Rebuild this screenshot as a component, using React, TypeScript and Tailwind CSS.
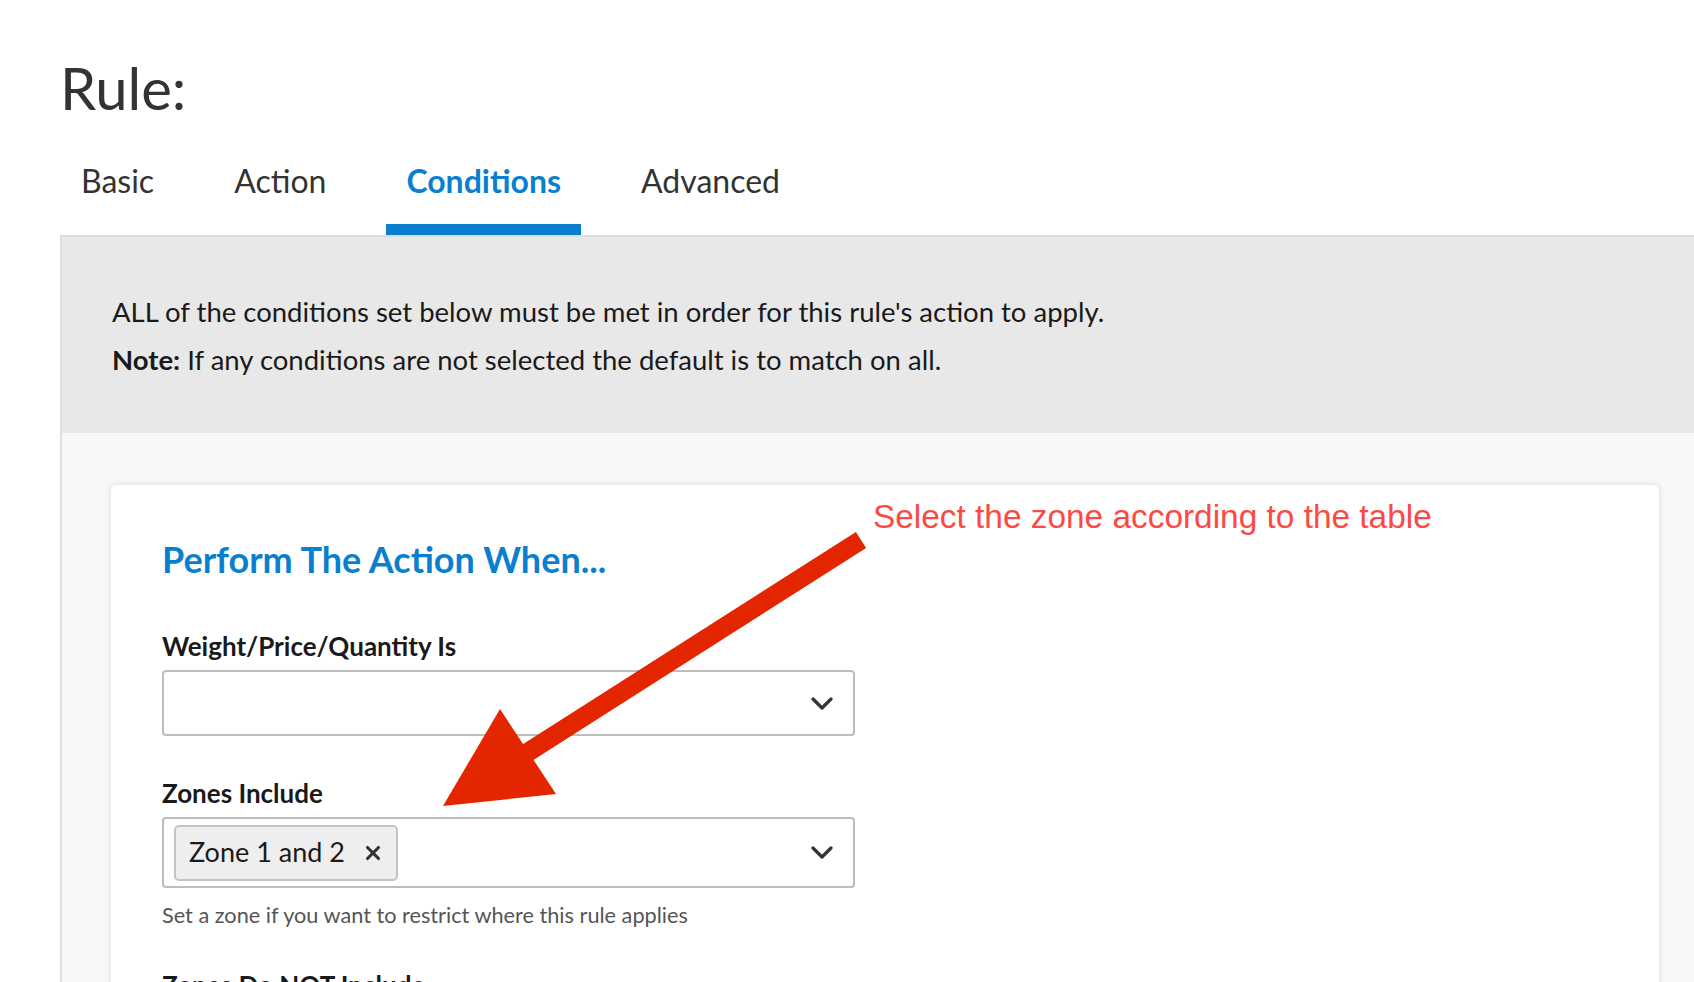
import { X } from "lucide-react";

const tabs = ["Basic", "Action", "Conditions", "Advanced"];

function Chevron() {
  return (
    <svg width="22" height="13" viewBox="0 0 22 13" className="mr-[20px]">
      <polyline points="2,2 11,11 20,2" fill="none" stroke="#333" strokeWidth="3.2" strokeLinecap="round" strokeLinejoin="round" />
    </svg>
  );
}

function Arrow() {
  return (
    <svg
      className="absolute left-0 top-0 pointer-events-none"
      width="1694"
      height="982"
      viewBox="0 0 1694 982"
    >
      <line x1="861" y1="540" x2="522" y2="756" stroke="#e32600" strokeWidth="19" />
      <polygon points="500,709 443,806 556,794" fill="#e32600" />
    </svg>
  );
}

export default function App() {
  return (
    <div className="relative w-[1694px] h-[982px] overflow-hidden bg-white font-['Lato','Noto_Sans',sans-serif] text-[#333]">
      <h1 className="ml-[60px] pt-[59px] text-[58px] leading-[58px] font-normal text-[#333]">Rule:</h1>

      <div className="ml-[61px] mt-[44px] flex gap-[40px]">
        {tabs.map((t) => {
          const active = t === "Conditions";
          return (
            <div
              key={t}
              className={
                active
                  ? "px-[20px] pb-[23px] text-[32px] leading-[40px] font-bold text-[#0a7fd0] border-b-[11px] border-[#0a7fd0]"
                  : "px-[20px] pb-[23px] text-[32px] leading-[40px] text-[#333] border-b-[11px] border-transparent"
              }
            >
              {t}
            </div>
          );
        })}
      </div>

      <div className="ml-[60px] border-l-2 border-[#dedede] bg-[#f8f8f8]">
        <div className="border-t-2 border-[#dcdcdc] bg-[#e8e8e8] pl-[50px] pt-[51px] pb-[49px] text-[27.5px] leading-[48px] text-[#1a1a1a]">
          <p>ALL of the conditions set below must be met in order for this rule's action to apply.</p>
          <p>
            <span className="font-bold">Note:</span> If any conditions are not selected the default is to match on all.
          </p>
        </div>

        <div className="pl-[49px] pt-[52px]">
          <div className="w-[1548px] rounded-[5px] bg-white shadow-[0_0_6px_rgba(0,0,0,0.12)] pl-[51px] pt-[53px] pb-[40px]">
            <h2 className="text-[36px] leading-[42px] font-bold text-[#0a7fd0]">Perform The Action When...</h2>

            <label className="block mt-[51px] text-[26px] leading-[30px] font-bold text-[#1a1a1a]">
              Weight/Price/Quantity Is
            </label>
            <div className="mt-[9px] w-[693px] h-[66px] rounded-[4px] border-2 border-[#bdbdbd] flex items-center justify-end">
              <Chevron />
            </div>

            <label className="block mt-[42px] text-[26px] leading-[30px] font-bold text-[#1a1a1a]">
              Zones Include
            </label>
            <div className="mt-[9px] w-[693px] h-[71px] rounded-[4px] border-2 border-[#bdbdbd] flex items-center justify-between pl-[10px]">
              <div className="h-[56px] rounded-[5px] border-2 border-[#c4c4c4] bg-[#eeeeee] flex items-center gap-[17px] pl-[13px] pr-[12px] text-[27px] text-[#1a1a1a]">
                <span>Zone 1 and 2</span>
                <X size={22} strokeWidth={3.4} className="text-[#333]" />
              </div>
              <Chevron />
            </div>
            <p className="mt-[13px] text-[21.7px] leading-[28px] text-[#555]">
              Set a zone if you want to restrict where this rule applies
            </p>

            <label className="block mt-[41px] text-[26px] leading-[30px] font-bold text-[#1a1a1a]">
              Zones Do NOT Include
            </label>
          </div>
        </div>
      </div>

      <div className="absolute left-[873px] top-[497px] text-[33.4px] leading-[40px] text-[#fc4a43] font-['Liberation_Sans',Arial,sans-serif]">
        Select the zone according to the table
      </div>

      <Arrow />
    </div>
  );
}
